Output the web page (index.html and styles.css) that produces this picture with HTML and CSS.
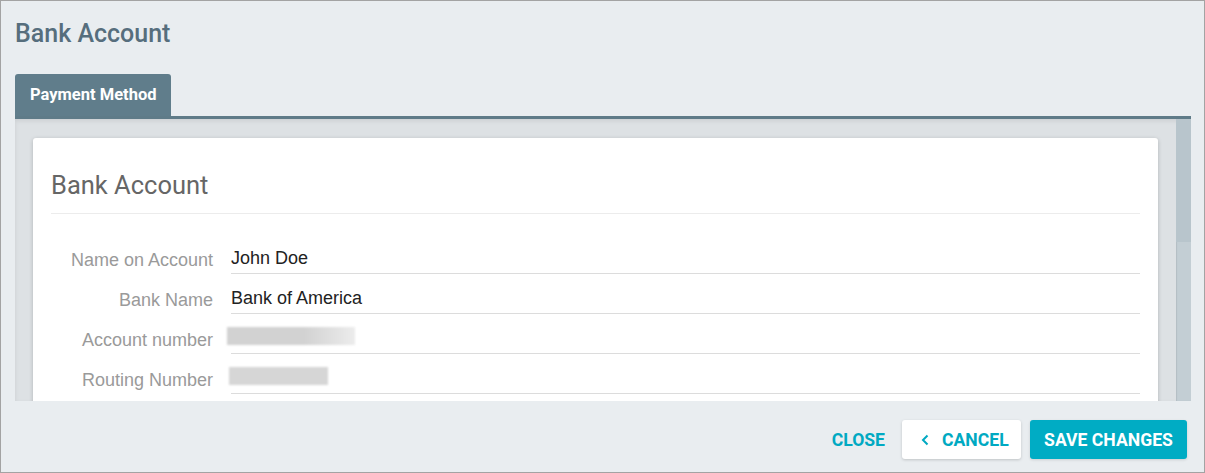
FILE: index.html
```html
<!DOCTYPE html>
<html lang="en">
<head>
    <meta charset="UTF-8">
    <meta name="viewport" content="width=device-width, initial-scale=1.0">
    <title>Bank Account</title>
    <link rel="stylesheet" href="styles.css">
</head>
<body>
    <div class="dialog">
        <h1 class="dialog-title">Bank Account</h1>

        <div class="tabs">
            <div class="tab active">Payment Method</div>
        </div>

        <div class="panel">
            <div class="panel-body">
                <div class="card">
                    <h2 class="card-title">Bank Account</h2>

                    <div class="form">
                        <div class="label">Name on Account</div>
                        <div class="value">John Doe</div>

                        <div class="label">Bank Name</div>
                        <div class="value">Bank of America</div>

                        <div class="label">Account number</div>
                        <div class="value"><span class="hidden hidden-long"></span></div>

                        <div class="label">Routing Number</div>
                        <div class="value"><span class="hidden hidden-short"></span></div>
                    </div>
                </div>
            </div>
            <div class="scrollbar"><div class="thumb"></div></div>
        </div>

        <div class="actions">
            <button class="btn btn-flat">CLOSE</button>
            <button class="btn btn-white">
                <svg width="8" height="12" viewBox="0 0 8 12"><polyline points="6.5,1.5 2,6 6.5,10.5" fill="none" stroke="#00a9c2" stroke-width="2"/></svg>
                CANCEL
            </button>
            <button class="btn btn-primary">SAVE CHANGES</button>
        </div>
    </div>
</body>
</html>
```

FILE: styles.css
```css
*{
    box-sizing: border-box;
}

body{
    margin: 0;
    font-family: Roboto, "Liberation Sans", sans-serif;
}

.dialog{
    width: 1205px;
    height: 473px;
    border: 1px solid #a3a3a3;
    background-color: #e9edf0;
    display: flex;
    flex-direction: column;
}

.dialog-title{
    height: 73px;
    margin: 0;
    padding: 18px 14px 0;
    font-size: 25px;
    line-height: 30px;
    font-weight: 500;
    color: #566e7d;
}

.tabs{
    display: flex;
    height: 42px;
    padding-left: 14px;
}

.tab{
    width: 156px;
    padding-left: 15px;
    line-height: 42px;
    font-size: 16.5px;
    font-weight: 700;
    color: #fff;
    background-color: #607d8b;
    border-radius: 3px 3px 0 0;
}

.panel{
    height: 285px;
    margin: 0 13px 0 14px;
    display: flex;
    border-top: 3px solid #5f7b88;
    background-color: #dde1e4;
    box-shadow: inset 0 2px 4px rgba(0, 0, 0, 0.08);
    overflow: hidden;
}

.panel-body{
    flex: 1;
    padding: 19px 18px 0;
    overflow: hidden;
}

.scrollbar{
    width: 15px;
    background-color: #c3ced4;
    box-shadow: inset 1px 0 1px rgba(0, 0, 0, 0.08);
}

.thumb{
    height: 123px;
    background-color: #b8c5cc;
}

.card{
    height: 300px;
    padding: 0 18px;
    background-color: #fff;
    border-radius: 3px;
    box-shadow: 0 1px 4px rgba(0, 0, 0, 0.2);
}

.card-title{
    margin: 0;
    padding: 32px 0 13px;
    font-size: 25.5px;
    line-height: 30px;
    font-weight: 400;
    color: #666;
    border-bottom: 1px solid #ececec;
}

.form{
    display: grid;
    grid-template-columns: 162px 1fr;
    column-gap: 18px;
    margin-top: 20px;
    font-family: "Liberation Sans", Arial, sans-serif;
    font-size: 18px;
}

.label{
    height: 40px;
    display: flex;
    align-items: flex-end;
    justify-content: flex-end;
    padding-bottom: 4px;
    line-height: 20px;
    color: #9a9a9a;
}

.value{
    height: 40px;
    display: flex;
    align-items: flex-end;
    padding-bottom: 5px;
    line-height: 20px;
    color: #222;
    border-bottom: 1px solid #dcdcdc;
}

/* masked numbers */
.hidden{
    display: block;
    height: 18px;
    margin-bottom: 3px;
    filter: blur(1px);
}

.hidden-long{
    width: 128px;
    margin-left: -4px;
    background: linear-gradient(to right, #d2d2d2 0%, #d2d2d2 60%, #ececec 100%);
}

.hidden-short{
    width: 99px;
    margin-left: -2px;
    background-color: #d6d6d6;
}

.actions{
    flex: 1;
    display: flex;
    justify-content: flex-end;
    align-items: flex-start;
    padding: 19px 17px 0;
    gap: 9px;
}

.btn{
    height: 39px;
    display: flex;
    align-items: center;
    gap: 13px;
    border: none;
    border-radius: 3px;
    font-family: Roboto, sans-serif;
    font-size: 17.6px;
    font-weight: 700;
    cursor: pointer;
}

.btn-flat{
    padding: 0 16px;
    margin-right: -8px;
    color: #00a9c2;
    background: none;
}

.btn-white{
    width: 119px;
    padding: 0 11px 0 19px;
    color: #00a9c2;
    background-color: #fff;
    box-shadow: 0 1px 3px rgba(0, 0, 0, 0.18);
}

.btn-primary{
    width: 157px;
    padding: 0 13px;
    justify-content: center;
    color: #fff;
    background-color: #00acc4;
    box-shadow: 0 1px 3px rgba(0, 0, 0, 0.12);
}
```
